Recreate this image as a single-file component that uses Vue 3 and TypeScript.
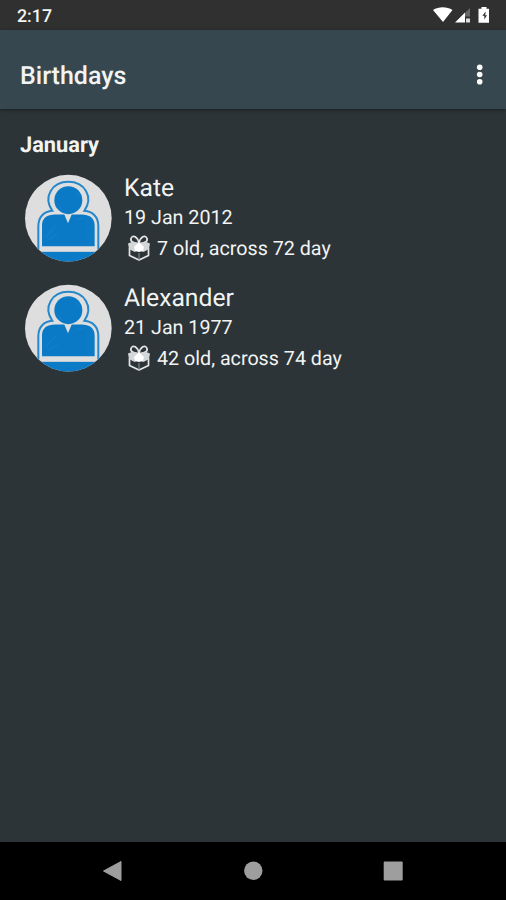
<script setup lang="ts">
interface Person {
  id: number
  name: string
  date: string
  info: string
}

const people: Person[] = [
  { id: 1, name: 'Kate', date: '19 Jan 2012', info: '7 old, across 72 day' },
  { id: 2, name: 'Alexander', date: '21 Jan 1977', info: '42 old, across 74 day' },
]
</script>

<template>
  <div class="screen">
    <header class="status">
      <span class="clock">2:17</span>
      <svg class="status-icons" width="60" height="20" viewBox="0 0 60 20">
        <path d="M0 4C5.500 0.300 14 0.300 19.500 4L10 16Z" fill="#fff" />
        <path d="M37 2V10.500H31V8Z" fill="#666" />
        <path d="M22 16.500L32 6.500V16.500Z" fill="#fff" />
        <rect x="33" y="12.500" width="4" height="4" fill="#ddd" />
        <path d="M48.500 1h5v1.700h2.500v14h-10.500V2.700H48.500Z" fill="#fff" />
        <path d="M52.700 5.500L49.300 9.800H51.300V13.500L54 9.300H52.200Z" fill="#333" />
      </svg>
    </header>

    <div class="toolbar">
      <h1 class="title">Birthdays</h1>
      <button class="more" aria-label="More options">
        <svg width="8" height="24" viewBox="0 0 8 24">
          <circle cx="3.700" cy="4.200" r="2.800" />
          <circle cx="3.700" cy="11.500" r="2.800" />
          <circle cx="3.700" cy="18.800" r="2.800" />
        </svg>
      </button>
    </div>

    <main class="content">
      <h2 class="month">January</h2>
      <ul class="list">
        <li v-for="p in people" :key="p.id" class="person">
          <svg class="avatar" width="88" height="88" viewBox="27 26.5 264 264">
            <defs>
              <clipPath :id="`avatar-${p.id}`"><circle cx="160" cy="159" r="130" /></clipPath>
            </defs>
            <circle cx="160" cy="159" r="130" fill="#dededf" />
            <g :clip-path="`url(#avatar-${p.id})`">
              <path
                d="M70 253V182C70 155 87 139 112 137C83 94 112 50 160 50C208 50 237 94 208 137C233 139 250 155 250 182V253"
                fill="none" stroke="#2588cb" stroke-width="6"
              />
              <path d="M81 243V181C81 158 97 148 120 148H148L159 174L170 148H199C223 148 239 158 239 181V243Z" fill="#0b7ac7" />
              <circle cx="160" cy="105" r="42" fill="#0b7ac7" />
              <rect x="28" y="260" width="264" height="40" fill="#0b7ac7" />
              <path d="M92 215L123 182M98 226L127 207M181 165L205 158M129 120L139 133M184 82L193 98" stroke="#238bd0" stroke-width="4" opacity=".35" />
            </g>
          </svg>
          <div class="details">
            <div class="name">{{ p.name }}</div>
            <div class="date">{{ p.date }}</div>
            <div class="info">
              <svg class="gift" width="24" height="28" viewBox="0 0 24 28">
                <g fill="none" stroke="#e4e6e6" stroke-width="1.700" stroke-linejoin="round">
                  <path d="M2.500 14V21.500L12 26L21.500 21.500V14" />
                  <path d="M11.500 10C7 9 3 8 4 4.500C5.500 0 11 3 11.800 9" />
                  <path d="M12.500 10C17 9 21 8 20 4.500C18.500 0 13 3 12.200 9" />
                </g>
                <path d="M1 9.500L6 7.500L12 9L18 7.500L23 9.500L22 15L16.500 18L12 16L7.500 18L2 15Z" fill="#d4d7d8" />
                <path d="M12 8L17 13L16 17L12 18L8 17L7 13Z" fill="#fff" />
                <path d="M12 19V26" stroke="#8c9395" stroke-width="1" />
              </svg>
              <span class="info-text">{{ p.info }}</span>
            </div>
          </div>
        </li>
      </ul>
    </main>

    <nav class="navbar">
      <svg width="20" height="22" viewBox="0 0 20 22"><path d="M19 1.500V20.500L1.500 11Z" stroke-width="1" stroke-linejoin="round" /></svg>
      <svg width="20" height="22" viewBox="0 0 20 22"><circle cx="10.300" cy="10.700" r="9.200" /></svg>
      <svg width="20" height="22" viewBox="0 0 20 22"><rect x=".700" y="1.500" width="19" height="19" rx="1" /></svg>
    </nav>
  </div>
</template>

<style>
body {
  margin: 0;
  background: #2c3437;
}
</style>

<style scoped>
.screen {
  display: flex;
  flex-direction: column;
  width: 506px;
  height: 900px;
  overflow: hidden;
  background: #2c3437;
  color: #f2f3f3;
  font-family: Roboto, sans-serif;
  text-rendering: geometricPrecision;
}
.status {
  display: flex;
  justify-content: space-between;
  height: 30px;
  flex: none;
  box-sizing: border-box;
  padding: 6px 13px 0 17px;
  background: #303030;
}
.clock {
  font-size: 17.8px;
  line-height: 22px;
  font-weight: 500;
}
.toolbar {
  display: flex;
  align-items: center;
  justify-content: space-between;
  height: 79px;
  flex: none;
  box-sizing: border-box;
  padding: 0 22px 0 20px;
  background: #37474f;
  box-shadow: 0 1px 3px rgba(0, 0, 0, 0.45);
}
.title {
  margin: 14px 0 0;
  font-size: 25px;
  line-height: 30px;
  font-weight: 500;
}
.more {
  display: flex;
  margin-top: 10px;
  padding: 0;
  border: 0;
  background: none;
  fill: #fff;
}
.content {
  flex: 1;
  padding: 23px 20px 0;
}
.month {
  margin: 0;
  font-size: 21.8px;
  line-height: 28px;
  font-weight: 700;
}
.list {
  display: grid;
  gap: 10px;
  margin: 0;
  padding: 14px 0 0 4px;
  list-style: none;
}
.person {
  display: flex;
  gap: 12px;
  height: 100px;
}
.avatar {
  flex: none;
}
.name {
  font-size: 24.7px;
  line-height: 29px;
}
.date {
  font-size: 19.7px;
  line-height: 30px;
}
.info {
  display: flex;
  align-items: center;
  gap: 6px;
  height: 31px;
  padding-left: 3px;
  font-size: 19.7px;
  line-height: 31px;
  white-space: nowrap;
}
.gift {
  margin-top: -2px;
}
.navbar {
  display: flex;
  align-items: center;
  justify-content: space-between;
  height: 58px;
  flex: none;
  box-sizing: border-box;
  padding: 0 103px 0 102px;
  background: #000;
  fill: #9e9e9e;
  stroke: #9e9e9e;
  stroke-width: 0;
}
</style>
